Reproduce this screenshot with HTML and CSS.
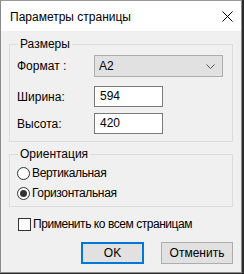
FILE: index.html
```html
<!DOCTYPE html>
<html lang="ru">
<head>
<meta charset="utf-8">
<title>Параметры страницы</title>
<link rel="stylesheet" href="styles.css">
</head>
<body>
<div class="window">
  <div class="titlebar">
    <span class="title">Параметры страницы</span>
    <svg class="close" width="11" height="11" viewBox="0 0 11 11"><path d="M0.5 0.5 L10.5 10.5 M10.5 0.5 L0.5 10.5" stroke="#000" stroke-width="1" fill="none"/></svg>
  </div>
  <div class="content">
    <fieldset class="group sizes">
      <legend>Размеры</legend>
      <div class="row first">
        <span class="label">Формат :</span>
        <div class="combo"><span>A2</span>
          <svg width="9" height="5" viewBox="0 0 9 5"><path d="M0.5 0.5 L4.5 4.5 L8.5 0.5" stroke="#555" stroke-width="1" fill="none"/></svg>
        </div>
      </div>
      <div class="row second">
        <span class="label">Ширина:</span>
        <div class="input">594</div>
      </div>
      <div class="row third">
        <span class="label">Высота:</span>
        <div class="input">420</div>
      </div>
    </fieldset>
    <fieldset class="group orient">
      <legend>Ориентация</legend>
      <div class="opt"><span class="radio"></span><span class="opt-text">Вертикальная</span></div>
      <div class="opt"><span class="radio checked"></span><span class="opt-text">Горизонтальная</span></div>
    </fieldset>
    <div class="opt check-row"><span class="checkbox"></span><span class="check-text">Применить ко всем страницам</span></div>
    <div class="buttons">
      <div class="btn default">OK</div>
      <div class="btn cancel">Отменить</div>
    </div>
  </div>
</div>
</body>
</html>
```
FILE: styles.css
```css
html, body {
  margin: 0;
  padding: 0;
  background: #2b2b2b;
}
body {
  font-family: "Liberation Sans", Arial, sans-serif;
  font-size: 12px;
  color: #000;
  width: 244px;
  height: 274px;
  overflow: hidden;
}
.window {
  width: 242px;
  height: 273px;
  box-sizing: border-box;
  border: 1px solid #8a8a8a;
  border-top-color: #9a9a9a;
  background: #f0f0f0;
  display: flex;
  flex-direction: column;
}
.titlebar {
  height: 30px;
  background: #fff;
  display: flex;
  align-items: center;
  padding: 0 8px 0 9px;
  flex: none;
}
.title {
  flex: 1;
  line-height: 16px;
  padding-top: 1px;
}
.close { display: block; }
.content {
  padding: 0 8px;
  display: flex;
  flex-direction: column;
}
.group {
  margin: 0;
  border: 1px solid #dcdcdc;
  padding: 0 7px;
  min-width: 0;
}
.group legend {
  padding: 0 2px;
  margin-left: 1px;
  line-height: 16px;
}
.sizes {
  margin-top: 5px;
  padding-top: 3px;
  padding-bottom: 7px;
}
.row { display: flex; align-items: center; }
.label { width: 77px; flex: none; }
.second { margin-top: 9px; }
.third { margin-top: 6px; }
.combo {
  width: 129px;
  height: 22px;
  box-sizing: border-box;
  background: #e1e1e1;
  border: 1px solid #adadad;
  display: flex;
  align-items: center;
  justify-content: space-between;
  padding: 0 7px 0 4px;
}
.combo svg { display: block; }
.input {
  width: 69px;
  height: 21px;
  box-sizing: border-box;
  background: #fff;
  border: 1px solid #7a7a7a;
  padding: 0 5px;
  line-height: 19px;
}
.orient {
  margin-top: 4px;
  padding-top: 1px;
  padding-bottom: 3px;
}
.opt { display: flex; align-items: center; height: 20px; }
.opt-text { letter-spacing: -0.35px; }
.check-text { letter-spacing: -0.45px; }
.radio {
  width: 13px;
  height: 13px;
  box-sizing: border-box;
  border: 1px solid #333;
  border-radius: 50%;
  background: #fff;
  margin-right: 2px;
  display: flex;
  align-items: center;
  justify-content: center;
  flex: none;
}
.radio.checked::after {
  content: "";
  width: 7px;
  height: 7px;
  border-radius: 50%;
  background: #333;
}
.check-row { margin-top: 7px; padding-left: 9px; }
.checkbox {
  width: 13px;
  height: 13px;
  box-sizing: border-box;
  border: 1px solid #333;
  background: #fff;
  margin-right: 2px;
  flex: none;
}
.buttons {
  display: flex;
  justify-content: flex-end;
  gap: 17px;
  margin-top: 8px;
}
.btn {
  height: 22px;
  box-sizing: border-box;
  background: #e1e1e1;
  border: 1px solid #adadad;
  display: flex;
  align-items: center;
  justify-content: center;
}
.btn.default { width: 63px; border: 2px solid #0078d7; }
.btn.cancel { width: 72px; }
```
